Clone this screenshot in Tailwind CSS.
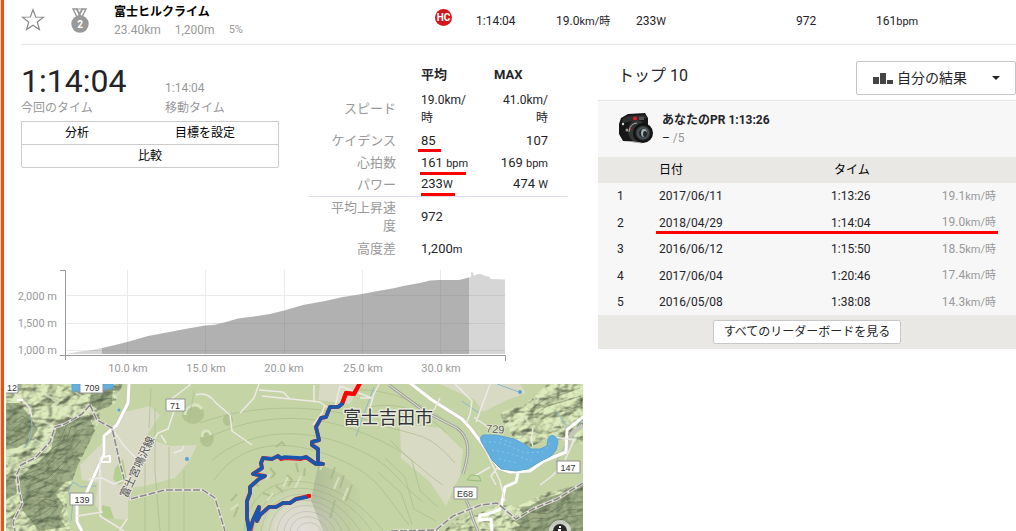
<!DOCTYPE html>
<html lang="ja">
<head>
<meta charset="utf-8">
<title>富士ヒルクライム</title>
<script src="https://cdn.jsdelivr.net/npm/@tailwindcss/browser@4"></script>
</head>
<body class="min-h-screen overflow-x-hidden border-l border-gray-300 bg-white font-[Roboto,'Noto_Sans_CJK_JP',sans-serif] text-xs text-[#242428]">
<div class="min-h-screen border-l-3 border-[#fc4c02]">
  <header class="ml-[17px] flex h-[45px] border-b border-[#e3e3ea]">
    <button aria-label="お気に入り" class="w-[44px] shrink-0 self-start pt-2">
      <svg class="size-6" viewBox="0 0 24 24" fill="none" stroke="#888" stroke-width="1.2"><path d="M12 1.8l2.7 7.2 7.8.2-6.2 4.8 2.1 7.6L12 17.3l-6.4 4.3 2.1-7.6L1.500 9.200l7.800-.2z"/></svg>
    </button>
    <svg class="mt-2 h-[26px] w-[49px] shrink-0" viewBox="0 0 49 26"><path d="M8 1h4l3 6-3 2zM21 1h-4l-3 6 3 2z" fill="none" stroke="#999" stroke-width="1.5"/><path d="M11 1h7l-3.500 6z" fill="none" stroke="#999"/><circle cx="15" cy="16" r="8.700" fill="#999"/><text x="15" y="20" text-anchor="middle" font-size="10" font-weight="700" fill="#fff">2</text></svg>
    <div class="w-[321px] shrink-0 pt-[3px] leading-[18px]">
      <h1 class="font-bold text-black">富士ヒルクライム</h1>
      <p class="flex gap-[14px] text-[#999]"><span>23.40km</span><span>1,200m</span><span class="text-[11px]">5%</span></p>
    </div>
    <div class="w-[41px] shrink-0 pt-[9px]"><span class="flex size-[17px] items-center justify-center rounded-full bg-[#d4161b] text-[10px] font-bold text-white">HC</span></div>
    <div class="w-[80px] shrink-0 pt-3 leading-[18px]">1:14:04</div>
    <div class="w-[80px] shrink-0 pt-3 leading-[18px]">19.0<span class="text-[11px]">km/時</span></div>
    <div class="w-[160px] shrink-0 pt-3 leading-[18px]">233<span class="text-[11px]">W</span></div>
    <div class="w-[80px] shrink-0 pt-3 leading-[18px]">972</div>
    <div class="shrink-0 pt-3 leading-[18px]">161<span class="text-[11px]">bpm</span></div>
  </header>

  <main class="flex gap-[15px]">
    <section class="w-[579px] shrink-0">
      <div class="flex h-[219px] gap-[30px] pl-[17px] pt-4">
        <div class="w-[258px] shrink-0">
          <div class="grid grid-cols-[144px_1fr] items-end leading-[18px]">
            <strong class="text-[32px] leading-[40px] font-normal">1:14:04</strong>
            <span class="pb-1 text-[#999]">1:14:04</span>
            <span class="-mt-[2px] text-[#999]">今回のタイム</span>
            <span class="-mt-[2px] text-[#999]">移動タイム</span>
          </div>
          <div class="mt-1 text-black">
            <div class="flex h-6 border border-[#ccc]">
              <button class="w-[110px]">分析</button><button class="flex-1">目標を設定</button>
            </div>
            <button class="-mt-px block h-6 w-full rounded-b-xs border border-[#ccc]">比較</button>
          </div>
        </div>
        <table class="w-[259px] shrink-0 self-start table-fixed border-collapse text-[13px] leading-[18px]">
          <colgroup><col class="w-[87px]"><col class="w-[82px]"><col class="w-[70px]"><col class="w-[20px]"></colgroup>
          <thead><tr class="h-[27px] text-left"><td></td><th class="pl-[25px]">平均</th><th class="pl-4">MAX</th><td></td></tr></thead>
          <tbody>
            <tr class="h-[42px]"><th class="text-right font-normal text-[#999]">スピード</th><td class="pl-[25px] text-xs leading-[18px]">19.0km/<br>時</td><td class="text-right text-xs leading-[18px]">41.0km/<br>時</td><td></td></tr>
            <tr class="h-[22px]"><th class="text-right font-normal text-[#999]">ケイデンス</th><td class="pl-[25px]"><span class="relative">85<i class="absolute -left-[3px] top-[16px] h-[3px] w-[23px] bg-[#ff0000]"></i></span></td><td class="text-right">107</td><td></td></tr>
            <tr class="h-[22px]"><th class="text-right font-normal text-[#999]">心拍数</th><td class="pl-[25px] whitespace-nowrap"><span class="relative">161 <span class="text-[11px]">bpm</span><i class="absolute -left-px top-[17px] h-[3px] w-[46px] bg-[#ff0000]"></i></span></td><td class="text-right">169 <span class="text-[11px]">bpm</span></td><td></td></tr>
            <tr class="h-[22px]"><th class="text-right font-normal text-[#999]">パワー</th><td class="pl-[25px]"><span class="relative">233<span class="text-[11px]">W</span><i class="absolute left-0 top-[17px] h-[3px] w-[34px] bg-[#ff0000]"></i></span></td><td class="text-right">474 <span class="text-[11px]">W</span></td><td></td></tr>
            <tr class="h-[42px] border-t border-[#dedee6]"><th class="text-right font-normal text-[#999]">平均上昇速<br>度</th><td class="pl-[25px]">972</td><td></td><td></td></tr>
            <tr class="h-[22px]"><th class="text-right font-normal text-[#999]">高度差</th><td class="pl-[25px]">1,200<span class="text-[11px]">m</span></td><td></td><td></td></tr>
          </tbody>
        </table>
      </div>

      <svg class="ml-[2px] block h-[120px] w-[577px]" viewBox="6 264 577 120" role="img" aria-label="標高グラフ">
        <path d="M127.500 270v84M205.500 270v84M284.500 270v84M362.500 270v84M440.500 270v84M66 295.500h439M66 323.500h439M66 350.500h439" stroke="#ebebeb"/>
        <path d="M66 354L80 351.500 92 350 102 348V354z" fill="#d6d6d6"/>
        <path d="M102 348L115 345 127 342 148 336 164 333 185 329 205 325.500 214 325 226 322 238 318.500 254 316.500 270 314 284 310.500 303 305 325 301 343 297 362 294 378 291 395 288 403 286 420 283 430 280.500 440 280H459L469 277.500V354H102z" fill="#b1b1b1"/>
        <path d="M469 277.500L471 277V272.500H473L474 276 477 274 481 274 485 276 489 276.500 491 279 505 279.500V354H469z" fill="#d6d6d6"/>
        <path d="M127.500 342v12M205.500 326v28M284.500 311v43M362.500 294v60M440.500 280v74M373 295.500h132M212 323.500h293M90 350.500h415" stroke="#777" opacity=".16"/>
        <path d="M60 270.500h5.500V360M60 355.500h445.500V361" fill="none" stroke="#999"/>
        <g font-size="11" fill="#999"><g text-anchor="end"><text x="57" y="300">2,000 m</text><text x="57" y="327">1,500 m</text><text x="57" y="354">1,000 m</text></g><g text-anchor="middle"><text x="128" y="372">10.0 km</text><text x="206" y="372">15.0 km</text><text x="284" y="372">20.0 km</text><text x="363" y="372">25.0 km</text><text x="441" y="372">30.0 km</text></g></g>
      </svg>

      <svg class="ml-[2px] block h-[147px] w-[577px]" viewBox="6 384 577 147" role="img" aria-label="地図">
        <defs>
          <filter id="relief" x="0" y="0" width="100%" height="100%" color-interpolation-filters="sRGB"><feTurbulence type="fractalNoise" baseFrequency=".06 .09" numOctaves="3" seed="8"/><feColorMatrix values="0 0 0 0 0 0 0 0 0 0 0 0 0 0 0 1 0 0 0 0"/><feDiffuseLighting surfaceScale="6" diffuseConstant="1.15" lighting-color="#d8e4b9"><feDistantLight azimuth="225" elevation="55"/></feDiffuseLighting></filter>
          <clipPath id="hills"><path d="M6 384H123L114 405 99 410 100 420 88 445 78 465 72 482 66 500 70 531H6zM583 384H548L526 403 500 413 504 424 514 438 530 447 549 438 583 445V384zM583 484L548 492 520 505 498 505 480 513 458 517 444 531H583z"/></clipPath>
          <clipPath id="mapbox"><path d="M6 384h577v147H6z"/></clipPath>
          <radialGradient id="summit" gradientUnits="userSpaceOnUse" cx="300" cy="531" r="54"><stop stop-color="#e1ddd9"/><stop offset=".45" stop-color="#dcdacc"/><stop offset="1" stop-color="#c4d4a4" stop-opacity="0"/></radialGradient>
          <linearGradient id="shade" x1="0" x2="1"><stop stop-color="#9ba78b" stop-opacity=".55"/><stop offset="1" stop-color="#adba96" stop-opacity="0"/></linearGradient>
        </defs>
        <g clip-path="url(#mapbox)" stroke-linejoin="round">
        <path d="M6 384h577v147H6z" fill="#c4d4a4"/>
        <path d="M125 412L150 406 160 415 145 438 170 446 197 445 190 460 175 478 145 486 128 488 128 520 105 518 95 505 98 483 82 480 80 465 105 440zM320 384H360L350 404 318 400zM400 424L440 428 463 450 460 475 446 506 430 482 401 458zM440 384H520L526 393 505 401 483 412 475 400z" fill="#d8dac3"/>
        <path d="M115 468l8-9 4 22-8 4-6-6zM102 505l8 2 4 12-12-1z" fill="#b5cf90"/>
        <g clip-path="url(#hills)">
          <rect x="6" y="384" width="577" height="147" filter="url(#relief)" opacity=".55"/>
          <path d="M92 388l21-2-1 18-8 9-15-9zM88 415l8 17-5 11 3 8-17 5 8 10-4 12-15 4-11 11 9 13-5 11 7 10-27 4-7-9-9-11-5-18 3-17 16-13 14-14 5-22 12-8zM6 403l13 0 10 12 9 14-8 12-13 7-11 1zM6 480l9 0 2 13-11 7zM585 487L563 493 543 499 530 506 518 507 525 516 514 521 521 526 514 531H585z" fill="#5f7051" opacity=".5"/>
          <path d="M10 425l12-9 12 8-9 13-15 7M12 430l11-8 7 5-6 9-12 7M22 464l15-5 12-15 11-4 7-16 14-7M22 469l18-6 14-16 12-5 5-15 13-5M24 475l20-8 12-15 14-7 7-14 9-2M24 481l21-9 15-14 13-8 8-10M25 487l23-9 14-14 12-9M25 493l24-8 8-5M26 500l14-8 14 0M28 510l17-11 12 3-10 9-17 9M35 513l12-7 11 1-9 10-21 10M90 392l13-5 13 3M88 398l14-6 13 1M90 403l12-4 12-1M530 410l15-11 15-4 20-7M535 415l12-9 14-4 20-6M540 420l13-7 15-3 14-5M510 523l19-11 18 2 20-12 16 0M515 529l18-11 17 1 17-9 16-1M540 531l12-7 15-7 16-2" fill="none" stroke="#3f5139" opacity=".35"/>
          <path d="M44 393l14 10-6 3 15 3-7 4 12 4M75 392l12 7M38 420l14 5-7 4 10 3-10 5M35 440l10 4-9 3 7 4M8 455l11-4M8 466l10-5M490 411l9-8 1 9 10-13 2 10 11-15 2 10M501 432l9-11 4 9 11-14 4 9M532 393l4 10 8-16M550 432l8-13 5 10 9-15M499 524l8-14 6 9 10-16M465 526l8-10 8 5 9-12" fill="none" stroke="#e1e9c8" stroke-width="2" opacity=".6"/>
        </g>
        <g fill="#b2c492"><ellipse cx="193" cy="414" rx="11" ry="10"/><ellipse cx="207" cy="438" rx="7" ry="9"/><ellipse cx="228" cy="420" rx="5" ry="6"/></g>
        <path d="M185 415c0-9 11-14 17-6M202 437c0-8 7-8 9-2" stroke="#d8e3bf" stroke-width="3" fill="none"/>
        <ellipse cx="300" cy="531" rx="55" ry="53" fill="url(#summit)"/>
        <path d="M311 500l7-35 17 5 22 17 12 44H323z" fill="url(#shade)"/>
        <g fill="none" stroke="#8b957d" opacity=".28"><path d="M297 531c2-10 20-12 24 0M290 531c3-19 30-19 38 0M284 531c4-26 40-26 51 0M277 531c5-35 51-33 65 0M269 531c7-43 61-39 81 0M261 531c8-50 70-48 99 0M253 531c9-59 81-55 119 0M244 531c8-70 93-62 139 0"/></g>
        <g fill="none" stroke="#a9ba8b" opacity=".65"><path d="M200 423c50-19 120-20 170-2s55 8 85 42M200 442c45-25 100-32 155-12s58 35 88 55M212 460c35-29 86-34 135-15s45 33 76 57M214 480c30-43 80-40 122-22s42 28 73 67M370 407c30-6 55 5 77 26M350 390c30-2 65 8 94 30M390 440l22 21 8 30 18 16M385 458l20 19 9 32 22 12M378 472l23 21 11 31M145 455v76M155 408v64l5 59M169 447v84M184 470v61M194 391l-5 30M151 388l-2 40"/></g>
        <path d="M252 482l7 4M270 468l5 6-4 4M287 475l5 5-4 6M296 463l2 9M305 468l-1 8M335 467l-4 12M344 475l-4 13M352 485l-6 16M276 486l7 6M263 493l8 3M237 494l-6 7M238 507l-4 10M276 447l6-5 3 4M335 500l-5 18" fill="none" stroke="#a3b483" stroke-width="2" opacity=".65"/>
        <path d="M266 480l4-6M283 487l5-10M295 488l6-12M267 501l6-8M325 460l-5 10M339 477l-5 12M348 488l-5 12M231 510l7-6" fill="none" stroke="#dfe5c9" stroke-width="2" opacity=".75"/>
        <g fill="none" stroke="#8fb8c8"><path d="M31 417q4 20-7 31M96 486l-15 1-8-5-5 9 5 10-2 20M374 387l-18 49M462 401l18 13M497 384l22 8M556 411l10 14 2 15-12 22M582 420l-18 32-18 5"/></g>
        <g fill="none" stroke="#c5c5b9" stroke-width="4"><path d="M129 384l-1 19-11 22-13 11v18l-19 42-8 9v17l5 9"/><path d="M410 383l22 17 30 19 9 10 9 12 19 27 11 4 20-1 14-10 22-9 5-17 12-10"/></g>
        <g fill="none" stroke="#fff" stroke-width="3"><path d="M129 384l-1 19-11 22-13 11v18l-19 42-8 9v17l5 9"/><path d="M410 383l22 17 30 19 9 10 9 12 19 27 11 4 20-1 14-10 22-9 1-22 12-10 16-11"/><path d="M518 473l-2 9-11 5-3 15-1 7M501 509l-13 5-8 1-1 5 12-1 1 12"/></g>
        <path d="M389 385l35 26 33 17c13 10 13 24 6 46M466 500c5 9 5 17 12 31" fill="none" stroke="#a2a49e" stroke-width="3"/><path d="M389 385l35 26 33 17c13 10 13 24 6 46M466 500c5 9 5 17 12 31" fill="none" stroke="#e3e1dc" stroke-width="1"/>
        <g fill="none" stroke="#eee9e9" stroke-width="1.500"><path d="M112 428l12 18 12 12M100 457v59l24 15M89 479l13-1 12 6 15-6 13-20 16-25 10-4 6-18-4-11 20-15-8-11M161 435l5 8M174 453l8-3 2-4M6 386l13 11 10 10 3 10M196 395q11-4 20 8l14 12 2 16 20 14M240 413l14-15 5-14M259 390l24 2 7 7M262 396l58 6 8 6M314 385v16M335 407l5-21 32 12 7-14M325 405l-3 8-9 12M360 398h13l-5 15M440 398l-6 12M455 384l17 17-2 13-4 10M490 384l-14 38M474 417l15 11M484 447l16 34 5 20M498 467l-7 9 5 9M533 428l-2 12 2 6M553 437l22 3M574 440l-9 20M540 485l12-9 6-6M475 476l15-9M127 519l-8 12M77 516l26-4"/></g>
        <path d="M17 400h6M103 457l7-1v6h-9" fill="none" stroke="#fff" stroke-width="2"/>
        <g fill="none" stroke="#e6e2da" stroke-width="3"><path d="M90 405l-8 9-17 10-10 3-5 15-15 16-14 7-4 9 2 16 3 14-9 18 2 9M90 405l7 15 15 8 8 35 7 27 3 9 35-9h38l12 8 10 33M391 531l45-1 17-14 28-11 16-2 19 16 17-10 24-10 26-16"/></g>
        <path d="M90 405l-8 9-17 10-10 3-5 15-15 16-14 7-4 9 2 16 3 14-9 18 2 9M90 405l7 15 15 8 8 35 7 27 3 9 35-9h38l12 8 10 33M391 531l45-1 17-14 28-11 16-2 19 16 17-10 24-10 26-16" fill="none" stroke="#888" stroke-width="1.500" stroke-dasharray="7 2"/>
        <path d="M72 384h41v4l-13 3H72zM481 441q-2-7 6-6h9l18 4 12 6 5 4h9l7-3 1-7c2-6 9-4 10 3l-2 8-5 6-8 4-16 9-11 2-15-2-9-9z" fill="#63b0df" stroke="#5ca4cf"/>
        <path d="M484 442h14l11 4 16 7 18-1M492 450l17 3 23 8M499 459l18 4M500 439l12 4M550 443l-5 8" fill="none" stroke="#8bc5e6" stroke-dasharray="2 3"/>
        <path d="M467 480l4-5 8 1 2 5z" fill="none" stroke="#96bd76"/>
        <circle cx="119" cy="410" r="1.500" fill="#55a4d5"/><circle cx="187" cy="459" r="2" fill="#55a4d5"/><circle cx="520" cy="392" r="2" fill="#55a4d5"/>
        <path d="M360 383L354 394 346 393 342 404 338 407 330 407 326 417 321 418 316 427 319 440 312 442 312 445 318 449 318 463 323 464 316 464 306 457 301 459 285 458 281 459 278 456 272 459 263 458 261 463 262 468 253 474 265 476 259 479 250 487 250 493 247 501 247 518 250 532 253 520 259 507 257 521 260 515 269 507 276 507 283 503 290 503 296 499 309 496" fill="none" stroke="#e02532" stroke-width="4" stroke-linecap="round"/>
        <path d="M360 383L354 394 346 393 342 404" fill="none" stroke="#f00" stroke-width="4"/>
        <path d="M342 404L338 407 330 407 326 417 321 418 316 427 319 440 312 442 312 445 318 449 318 463 323 464 316 464 306 457 301 458 285 457 281 458 278 456 272 459 263 458 261 463 262 468 253 474 265 476 259 479 250 487 250 493 247 501 247 518 249 532 253 520 259 507 257 521 260 515 269 507 276 507 283 503 290 503 296 499 307 497" fill="none" stroke="#1857ae" stroke-width="3.500" stroke-linecap="round"/>
        <circle cx="309" cy="496" r="2.200" fill="#f00"/>
        <g font-family="Liberation Sans, Noto Sans CJK JP, sans-serif" text-anchor="middle">
          <g fill="#fff" stroke="#929292"><path d="M-5 376H18v17H-5zM80 376h23v17H80zM166 399h19v12h-19zM70 493h23v12H70zM454 487h23v12h-23zM557 461h23v12h-23z"/></g>
          <g font-size="9" fill="#333"><text x="12" y="391">12</text><text x="92" y="391">709</text><text x="175" y="409">71</text><text x="82" y="503">139</text><text x="465" y="497">E68</text><text x="568" y="471">147</text></g>
          <text x="495" y="433" font-size="11" fill="#666" stroke="#dfe5cb" stroke-width="2" paint-order="stroke" transform="rotate(4 495 433)">729</text>
          <text x="137" y="471" font-size="11" fill="#555" stroke="#e8e5db" stroke-width="2" paint-order="stroke" transform="rotate(-65 137 467)">富士宮鳴沢線</text>
          <text x="388" y="424" font-size="18" fill="#30333a" stroke="#e8ead9" stroke-width="3" paint-order="stroke">富士吉田市</text>
        </g>
        <circle cx="560" cy="531" r="11" fill="#eee" opacity=".65"/><circle cx="560" cy="531" r="7" fill="#292929"/><path d="M559 526h2v2h-2zM558 529h3v2h-3z" fill="#fff"/>
        </g>
      </svg>
    </section>

    <section class="min-w-0 flex-1">
      <div class="flex h-[55px] items-start justify-between pt-4">
        <h2 class="pl-5 pt-[3px] text-base leading-6 font-normal">トップ 10</h2>
        <button class="flex h-[34px] w-[160px] items-center rounded-xs border border-[#c5c5c9] pl-4 text-sm"><svg class="mr-1 h-3 w-5 shrink-0" viewBox="0 0 20 12" fill="#444"><path d="M0 5h6v7H0zM7 1h6v11H7zM14 8h6v4h-6z"/></svg><span>自分の結果</span><svg class="ml-auto mr-[15px] h-1 w-2" viewBox="0 0 8 4"><path d="M0 0h8L4 4z" fill="#242428"/></svg></button>
      </div>
      <div class="flex h-[57px] items-center gap-[9px] border-t border-[#e3e3ea] bg-[#f7f7f7] pl-5">
        <svg class="h-8 w-[35px] shrink-0" viewBox="0 0 35 32"><defs><radialGradient id="lens"><stop offset="0" stop-color="#78868a"/><stop offset=".35" stop-color="#171a1d"/><stop offset=".65" stop-color="#50595c"/><stop offset="1" stop-color="#141414"/></radialGradient></defs><path d="M3 5l7-4 17-1 3 5v18l-5 6-20-1-4-7 0-10z" fill="#171717"/><path d="M4 6l7-3 16-1 2 3-24 5z" fill="#30302f"/><circle cx="17" cy="5.500" r="2" fill="#e21c24"/><path d="M21 4h5v3h-5z" fill="#52534f"/><circle cx="5" cy="11" r="1.200" fill="#ddd"/><circle cx="9" cy="17" r="1.500" fill="#999"/><ellipse cx="19" cy="18" rx="9" ry="11" fill="#343535"/><path d="M11 19a8 9 0 018-9M15 29l9 1" stroke="#aaa" fill="none"/><circle cx="25" cy="20" r="10" fill="#111"/><circle cx="25" cy="20" r="8" fill="url(#lens)"/><ellipse cx="26" cy="20" rx="3" ry="4" fill="#aab2b4"/><ellipse cx="27" cy="21" rx="2" ry="3" fill="#242b2e"/><path d="M12 14l1 3" stroke="#c93535"/></svg>
        <div class="leading-[18px]"><p class="font-bold">あなたのPR 1:13:26</p><p>– <span class="text-[#999]">/5</span></p></div>
      </div>
      <div class="relative">
        <table class="w-full table-fixed border-collapse bg-[#f7f7f7] text-left leading-[18px]">
          <colgroup><col class="w-[61px]"><col class="w-[172px]"><col><col class="w-[104px]"></colgroup>
          <thead class="bg-[#e9e8e4] text-black"><tr class="h-[26px]"><td></td><th class="font-normal">日付</th><th class="pl-[3px] font-normal">タイム</th><td></td></tr></thead>
          <tbody>
            <tr class="h-[26px]"><td class="pl-[19px]">1</td><td>2017/06/11</td><td>1:13:26</td><td class="pr-5 text-right text-[#999]">19.1<span class="text-[11px]">km/時</span></td></tr>
            <tr class="h-[27px]"><td class="pl-[19px]">2</td><td>2018/04/29</td><td>1:14:04</td><td class="pr-5 text-right text-[#999]">19.0<span class="text-[11px]">km/時</span></td></tr>
            <tr class="h-[26px]"><td class="pl-[19px]">3</td><td>2016/06/12</td><td>1:15:50</td><td class="pr-5 text-right text-[#999]">18.5<span class="text-[11px]">km/時</span></td></tr>
            <tr class="h-[27px]"><td class="pl-[19px]">4</td><td>2017/06/04</td><td>1:20:46</td><td class="pr-5 text-right text-[#999]">17.4<span class="text-[11px]">km/時</span></td></tr>
            <tr class="h-[26px]"><td class="pl-[19px]">5</td><td>2016/05/08</td><td>1:38:08</td><td class="pr-5 text-right text-[#999]">14.3<span class="text-[11px]">km/時</span></td></tr>
          </tbody>
        </table>
        <i class="absolute left-[58px] right-[18px] top-[74px] h-[3px] bg-[#ff0000]"></i>
      </div>
      <div class="flex h-[34px] items-center justify-center bg-[#e9e8e4]"><button class="h-6 w-[188px] rounded-xs border border-[#c8c8c8] bg-white">すべてのリーダーボードを見る</button></div>
    </section>
  </main>
</div>
</body>
</html>
